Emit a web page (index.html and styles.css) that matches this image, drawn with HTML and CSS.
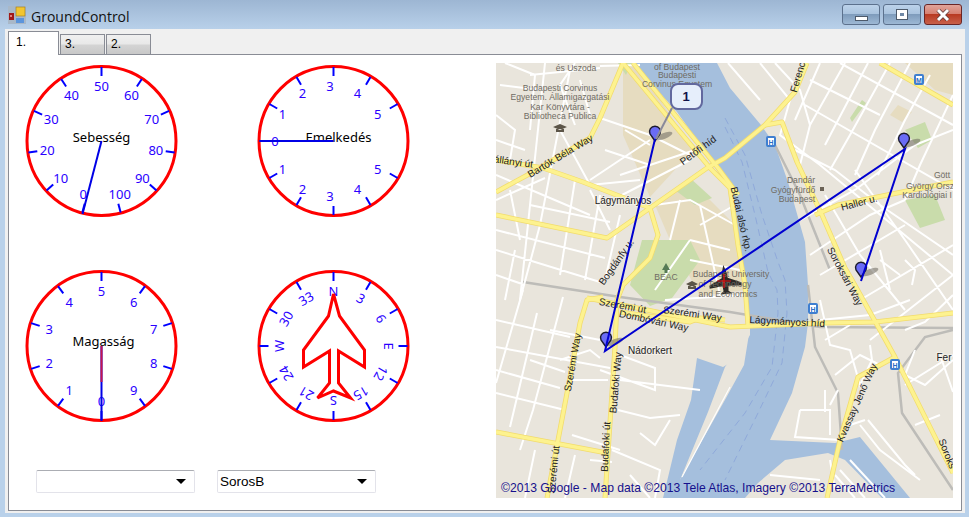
FILE: index.html
```html
<!DOCTYPE html>
<html>
<head>
	<meta charset="utf-8"/>
	<title>GroundControl</title>
	<link rel="stylesheet" href="styles.css">
</head>
<body>
<div class="window">
	<div class="titlebar">
		<svg class="app-icon" width="18" height="18" viewBox="0 0 18 18">
			<rect width="18" height="18" fill="#a9b8c8"/>
			<rect x="1" y="7" width="5" height="7" fill="#a01818"/>
			<rect x="2" y="9" width="2" height="2" fill="#e08080"/>
			<rect x="8" y="1" width="9" height="9" fill="#f2c530" stroke="#9a7a20" stroke-width="0.6"/>
			<rect x="8" y="12" width="8" height="5" fill="#5c95dc"/>
		</svg>
		<span class="title">GroundControl</span>
		<div class="caption-buttons">
			<div class="caption-btn"><span class="glyph-min"></span></div>
			<div class="caption-btn"><span class="glyph-max"></span></div>
			<div class="caption-btn close">
				<svg width="14" height="12" viewBox="0 0 14 12">
					<path d="M2 1 L12 11 M12 1 L2 11" stroke="#5c3a3a" stroke-width="4.4"/>
					<path d="M2 1 L12 11 M12 1 L2 11" stroke="#fff" stroke-width="3"/>
				</svg>
			</div>
		</div>
	</div>
	<div class="client">
		<div class="tabs">
			<div class="tab active">1.</div>
			<div class="tab">3.</div>
			<div class="tab">2.</div>
		</div>
		<div class="panel">
			<div class="left-col">
				<div class="gauges">
					<!-- Sebesseg -->
					<svg class="gauge" viewBox="-79.5 -80 160 160">
						<circle class="ring" r="74.5"/>
						<line class="tick" y1="-74" y2="-65" transform="rotate(195)"/>
						<line class="tick" y1="-74" y2="-65" transform="rotate(228)"/>
						<line class="tick" y1="-74" y2="-65" transform="rotate(261)"/>
						<line class="tick" y1="-74" y2="-65" transform="rotate(294)"/>
						<line class="tick" y1="-74" y2="-65" transform="rotate(327)"/>
						<line class="tick" y1="-74" y2="-65"/>
						<line class="tick" y1="-74" y2="-65" transform="rotate(33)"/>
						<line class="tick" y1="-74" y2="-65" transform="rotate(66)"/>
						<line class="tick" y1="-74" y2="-65" transform="rotate(99)"/>
						<line class="tick" y1="-74" y2="-65" transform="rotate(132)"/>
						<line class="tick" y1="-74" y2="-65" transform="rotate(165)"/>
						<text class="num" dx="-4" transform="rotate(195) translate(0,-55) rotate(-195)">0</text>
						<text class="num" transform="rotate(228) translate(0,-55) rotate(-228)">10</text>
						<text class="num" transform="rotate(261) translate(0,-55) rotate(-261)">20</text>
						<text class="num" transform="rotate(294) translate(0,-55) rotate(-294)">30</text>
						<text class="num" transform="rotate(327) translate(0,-55) rotate(-327)">40</text>
						<text class="num" transform="translate(0,-55)">50</text>
						<text class="num" transform="rotate(33) translate(0,-55) rotate(-33)">60</text>
						<text class="num" transform="rotate(66) translate(0,-55) rotate(-66)">70</text>
						<text class="num" transform="rotate(99) translate(0,-55) rotate(-99)">80</text>
						<text class="num" transform="rotate(132) translate(0,-55) rotate(-132)">90</text>
						<text class="num" dx="4" transform="rotate(165) translate(0,-55) rotate(-165)">100</text>
						<text class="gauge-name" y="-4">Sebesség</text>
						<line class="needle" x1="0" y1="0" x2="-19" y2="73"/>
					</svg>
					<!-- Emelkedes -->
					<svg class="gauge" viewBox="-79.5 -80 160 160">
						<circle class="ring" r="74.5"/>
						<line class="tick" y1="-74" y2="-65"/>
						<line class="tick" y1="-74" y2="-65" transform="rotate(30)"/>
						<line class="tick" y1="-74" y2="-65" transform="rotate(60)"/>
						<line class="tick" y1="-74" y2="-65" transform="rotate(120)"/>
						<line class="tick" y1="-74" y2="-65" transform="rotate(150)"/>
						<line class="tick" y1="-74" y2="-65" transform="rotate(180)"/>
						<line class="tick" y1="-74" y2="-65" transform="rotate(210)"/>
						<line class="tick" y1="-74" y2="-65" transform="rotate(240)"/>
						<line class="tick" y1="-74" y2="-65" transform="rotate(270)"/>
						<line class="tick" y1="-74" y2="-65" transform="rotate(300)"/>
						<line class="tick" y1="-74" y2="-65" transform="rotate(330)"/>
						<text class="num" dx="-3.5" transform="translate(0,-55)">3</text>
						<text class="num" dx="-3.5" transform="rotate(30) translate(0,-55) rotate(-30)">4</text>
						<text class="num" dx="-3.5" transform="rotate(60) translate(0,-55) rotate(-60)">5</text>
						<text class="num" dx="-3.5" transform="rotate(120) translate(0,-55) rotate(-120)">5</text>
						<text class="num" dx="-3.5" transform="rotate(150) translate(0,-55) rotate(-150)">4</text>
						<text class="num" dx="-3.5" transform="rotate(180) translate(0,-55) rotate(-180)">3</text>
						<text class="num" dx="-3.5" transform="rotate(210) translate(0,-55) rotate(-210)">2</text>
						<text class="num" dx="-3.5" transform="rotate(240) translate(0,-55) rotate(-240)">1</text>
						<text class="num" dx="-3.5" transform="rotate(270) translate(0,-55) rotate(-270)">0</text>
						<text class="num" dx="-3.5" transform="rotate(300) translate(0,-55) rotate(-300)">1</text>
						<text class="num" dx="-3.5" transform="rotate(330) translate(0,-55) rotate(-330)">2</text>
						<text class="gauge-name" x="5" y="-4">Emelkedés</text>
						<line class="needle" x1="0" y1="0" x2="-74" y2="0"/>
					</svg>
					<!-- Magassag -->
					<svg class="gauge" viewBox="-79.5 -80 160 160">
						<circle class="ring" r="74.5"/>
						<line class="tick" y1="-74" y2="-65" transform="rotate(180)"/>
						<line class="tick" y1="-74" y2="-65" transform="rotate(216)"/>
						<line class="tick" y1="-74" y2="-65" transform="rotate(252)"/>
						<line class="tick" y1="-74" y2="-65" transform="rotate(288)"/>
						<line class="tick" y1="-74" y2="-65" transform="rotate(324)"/>
						<line class="tick" y1="-74" y2="-65"/>
						<line class="tick" y1="-74" y2="-65" transform="rotate(36)"/>
						<line class="tick" y1="-74" y2="-65" transform="rotate(72)"/>
						<line class="tick" y1="-74" y2="-65" transform="rotate(108)"/>
						<line class="tick" y1="-74" y2="-65" transform="rotate(144)"/>
						<text class="num" transform="rotate(180) translate(0,-55) rotate(-180)">0</text>
						<text class="num" transform="rotate(216) translate(0,-55) rotate(-216)">1</text>
						<text class="num" transform="rotate(252) translate(0,-55) rotate(-252)">2</text>
						<text class="num" transform="rotate(288) translate(0,-55) rotate(-288)">3</text>
						<text class="num" transform="rotate(324) translate(0,-55) rotate(-324)">4</text>
						<text class="num" transform="translate(0,-55)">5</text>
						<text class="num" transform="rotate(36) translate(0,-55) rotate(-36)">6</text>
						<text class="num" transform="rotate(72) translate(0,-55) rotate(-72)">7</text>
						<text class="num" transform="rotate(108) translate(0,-55) rotate(-108)">8</text>
						<text class="num" transform="rotate(144) translate(0,-55) rotate(-144)">9</text>
						<text class="gauge-name" x="2" y="-5">Magasság</text>
						<line class="needle" x1="0" y1="0" x2="0" y2="75"/>
						<line class="needle-short" x1="0" y1="0" x2="0" y2="36"/>
					</svg>
					<!-- iranytu -->
					<svg class="gauge" viewBox="-79.5 -80 160 160">
						<circle class="ring" r="74.5"/>
						<line class="tick" y1="-74" y2="-65"/>
						<line class="tick" y1="-74" y2="-65" transform="rotate(30)"/>
						<line class="tick" y1="-74" y2="-65" transform="rotate(60)"/>
						<line class="tick" y1="-74" y2="-65" transform="rotate(90)"/>
						<line class="tick" y1="-74" y2="-65" transform="rotate(120)"/>
						<line class="tick" y1="-74" y2="-65" transform="rotate(150)"/>
						<line class="tick" y1="-74" y2="-65" transform="rotate(180)"/>
						<line class="tick" y1="-74" y2="-65" transform="rotate(210)"/>
						<line class="tick" y1="-74" y2="-65" transform="rotate(240)"/>
						<line class="tick" y1="-74" y2="-65" transform="rotate(270)"/>
						<line class="tick" y1="-74" y2="-65" transform="rotate(300)"/>
						<line class="tick" y1="-74" y2="-65" transform="rotate(330)"/>
						<text class="num" transform="translate(0,-55)">N</text>
						<text class="num" transform="rotate(30) translate(0,-55)">3</text>
						<text class="num" transform="rotate(60) translate(0,-55)">6</text>
						<text class="num" transform="rotate(90) translate(0,-55)">E</text>
						<text class="num" transform="rotate(120) translate(0,-55)">12</text>
						<text class="num" transform="rotate(150) translate(0,-55)">15</text>
						<text class="num" transform="rotate(180) translate(0,-55)">S</text>
						<text class="num" transform="rotate(210) translate(0,-55)">21</text>
						<text class="num" transform="rotate(240) translate(0,-55)">24</text>
						<text class="num" transform="rotate(270) translate(0,-55)">W</text>
						<text class="num" transform="rotate(300) translate(0,-55)">30</text>
						<text class="num" transform="rotate(330) translate(0,-55)">33</text>
						<polygon class="plane-outline" points="0,-52 6,-30 31,4 31,21 5,5 5,37 17,52 0,45 -16,52 -4,37 -4,5 -30,21 -30,4 -5,-30"/>
					</svg>
				</div>
				<div class="combos">
					<div class="combo"><span class="combo-arrow"></span></div>
					<div class="combo"><span>SorosB</span><span class="combo-arrow"></span></div>
				</div>
			</div>
			<svg class="map" viewBox="496 63 457 435">
				<rect x="496" y="63" width="457" height="435" fill="#e9e5dc"/>
				<!-- tan areas and parks -->
				<g class="tan">
					<polygon points="623,63 636,63 693,150 650,197 623,135"/>
					<polygon points="655,205 690,180 735,225 745,290 700,296 670,240"/>
					<polygon points="905,63 953,63 953,95 935,90"/>
					<polygon points="898,105 912,112 902,122 890,115"/>
				</g>
				<g class="park">
					<polygon points="630,285 642,240 660,240 690,240 700,260 672,298 650,306"/>
					<polygon points="675,190 690,178 712,198 695,205"/>
					<polygon points="714,110 725,90 762,128 755,138"/>
					<polygon points="850,118 862,100 866,103 852,122"/>
					<polygon points="905,130 925,122 932,140 918,148"/>
					<polygon points="905,200 935,195 945,220 920,228"/>
					<polygon points="618,63 632,63 626,75"/>
				</g>
				<!-- river -->
				<path class="water" d="M633 63 L717 63 L730 88 L761 125 L775 145 L788 182 L805 242 L808 285 L808 323 L805 347 L792 393 L770 440 L835 443 L860 437 L910 498 L882 498 L845 460 L828 453 L785 460 L758 483 L745 498 L663 498 L677 440 L691 400 L697 358 L723 367 L735 360 L750 335 L750 323 L745 285 L738 245 L730 188 L710 158 L677 112 Z"/>
				<polygon class="land" points="725,367 749,334 744,365 726,398 690,462 680,480 708,412"/>
				<path class="river-dash" d="M725 118 L745 155 L762 215 L778 262 L785 280 L787 313 L782 363 L758 413 L725 480"/>
				<path class="river-dash" d="M725 127 L742 162 L755 215 L768 272 L777 290 L778 313 L772 367 L745 413 L700 470"/>
				<!-- rail -->
				<path class="rail" d="M523 282 L620 297 L730 312 L820 327 L953 328 M808 285 L815 347 L838 393 L842 450 M953 330 L925 337 L898 373 L902 413 L953 490 M775 145 L800 195 L830 270"/>
				<!-- streets -->
				<path class="street" d="M496 175 L590 215 M496 230 L605 258 M496 250 L600 282 M496 275 L525 285 M545 63 L520 300 M570 70 L540 225 L520 300 M560 130 L590 185 L640 180 M600 118 L650 135 L690 155 M605 150 L650 165 M590 180 L650 140 M625 130 L650 145 M620 175 L695 150 M622 195 L690 160 M590 190 L610 230 M510 190 L520 240 M530 205 L610 222 M640 65 L600 66 M580 80 L590 115 M500 85 L540 90 M575 63 L560 85 L575 125 M575 180 L560 275 M600 195 L585 280 M496 200 L545 178 M496 140 L525 150 M496 115 L515 130 L510 160 M620 215 L605 280 M515 250 L505 300"/>
				<path class="street" d="M505 63 L535 75 L530 130 M530 75 L600 68 M496 320 L570 337 M496 347 L610 368 M573 380 L608 380 M496 393 L565 410 M523 290 L496 383 M563 297 L533 410 L520 450 M537 313 L510 427 M550 330 L600 340 M530 360 L565 372 M496 370 L560 388 M620 355 L655 368 L655 390 L600 370 M620 380 L700 390 M618 410 L650 418 L680 415 M612 450 L660 470 L655 498 M572 435 L620 450 M640 433 L655 445 L670 420 M560 360 L590 350 L600 358 M535 450 L525 498 M575 455 L565 498 M590 460 L612 462 M630 475 L650 498"/>
				<path class="street" d="M655 205 L690 200 L735 225 M680 200 L670 240 M700 205 L720 295 M655 290 L690 240 M690 240 L730 250 M665 300 L745 295 M700 225 L735 205 M690 260 L740 270"/>
				<path class="street" d="M760 63 L790 100 L780 135 L820 165 L953 275 M728 63 L760 100 M775 63 L800 90 L810 125 M820 63 L795 120 M845 63 L810 125 L800 165 M868 63 L825 145 M890 63 L850 135 L830 170 M910 63 L875 130 L855 175 M930 75 L905 120 L878 175 M953 95 L920 165 L905 200 M795 150 L835 170 L880 205 L953 255 M805 105 L953 190 M840 63 L953 125 M810 80 L880 115 M800 220 L855 190 L915 145 L953 130 M810 255 L870 215 L905 200 M820 275 L905 225 M860 300 L953 245 M870 340 L953 275 M825 195 L860 255 L905 310 M855 170 L905 240 L953 310 M880 260 L900 275 M880 250 L890 290 M905 260 L915 270 L912 285"/>
				<path class="street" d="M820 300 L830 345 L850 350 L860 385 L872 360 L870 345 M825 340 L850 325 M835 375 L860 355 L880 365 M820 320 L870 315 L910 300 M905 330 L925 322 L953 295 M915 350 L905 375 L925 385 L953 360 M905 385 L953 355 M940 415 L915 425 M940 355 L953 392 M868 420 L905 465 L915 475 M860 425 L880 450 L920 480 M800 410 L795 437 L840 440 M800 410 L830 410 L830 435 M825 390 L825 412 M838 390 L830 405 M850 425 L865 420 M835 475 L855 498 M850 460 L885 498 M840 470 L865 498 M770 475 L820 480 M830 460 L835 490"/>
				<path class="street-thin" d="M730 387 L682 477"/>
				<!-- yellow roads, casing then fill -->
				<g class="roads-casing">
					<path d="M496 192 L533 172 L590 138 L600 118 L623 63"/>
					<path d="M496 160 L543 168 L583 182 L650 208"/>
					<path d="M496 215 L607 238 L650 208 L707 168 L725 158 L765 125 L795 92 L807 63"/>
					<path d="M623 63 L710 168 L730 188 L738 245 L745 285 L748 325"/>
					<path d="M633 63 L718 168 L738 195"/>
					<path d="M650 208 L658 235 L650 258 L623 285 L617 300 L615 347 L605 498"/>
					<path d="M603 297 L587 300 L580 323 L567 393 L547 498"/>
					<path d="M587 298 L647 310 L730 327 L825 323 L875 322 L953 313"/>
					<path d="M620 312 L690 322 L700 318 L725 320"/>
					<path d="M496 432 L607 453"/>
					<path d="M765 125 L782 122 L797 162 L822 215 L845 268 L852 280 L895 357 L953 473"/>
					<path d="M815 215 L838 205 L902 192 L953 182"/>
					<path d="M895 357 L858 377 L840 440 L827 498"/>
					<path d="M880 63 L953 105"/>
				</g>
				<g class="roads">
					<path d="M496 192 L533 172 L590 138 L600 118 L623 63"/>
					<path d="M496 160 L543 168 L583 182 L650 208"/>
					<path d="M496 215 L607 238 L650 208 L707 168 L725 158 L765 125 L795 92 L807 63"/>
					<path d="M623 63 L710 168 L730 188 L738 245 L745 285 L748 325"/>
					<path d="M633 63 L718 168 L738 195"/>
					<path d="M650 208 L658 235 L650 258 L623 285 L617 300 L615 347 L605 498"/>
					<path d="M603 297 L587 300 L580 323 L567 393 L547 498"/>
					<path d="M587 298 L647 310 L730 327 L825 323 L875 322 L953 313"/>
					<path d="M620 312 L690 322 L700 318 L725 320"/>
					<path d="M496 432 L607 453"/>
					<path d="M765 125 L782 122 L797 162 L822 215 L845 268 L852 280 L895 357 L953 473"/>
					<path d="M815 215 L838 205 L902 192 L953 182"/>
					<path d="M895 357 L858 377 L840 440 L827 498"/>
					<path d="M880 63 L953 105"/>
				</g>
				<!-- plane marker sits under the labels -->
				<g transform="translate(725,281) rotate(-6)">
					<path d="M0 -16 L2.5 -8 L3 -3 L16 3 L16 6 L3 5 L2.5 10 L6 13 L-6 13 L-2.5 10 L-3 5 L-16 6 L-16 3 L-3 -3 L-2.5 -8 Z" fill="#2c2a28"/>
				</g>
				<!-- labels on the map -->
				<g class="poi">
					<text x="576" y="71">és Uszoda</text>
					<text x="560" y="91">Budapesti Corvinus</text>
					<text x="560" y="100">Egyetem. Államigazgatási</text>
					<text x="560" y="110">Kar Könyvtára -</text>
					<text x="560" y="119">Bibliotheca Publica</text>
					<text x="677" y="70">of Budapest</text>
					<text x="677" y="78">Budapesti</text>
					<text x="677" y="87">Corvinus Egyetem</text>
					<text x="666" y="280">BEAC</text>
					<text x="731" y="277">Budapest University</text>
					<text x="725" y="287">of Technology</text>
					<text x="728" y="297">and Economics</text>
					<text x="801" y="183">Dandár</text>
					<text x="793" y="193">Gyógyfürdő</text>
					<text x="797" y="202">Budapest</text>
					<text x="942" y="178">Gött</text>
					<text x="930" y="189">György Orsz</text>
					<text x="927" y="198">Kardiológiai I</text>
				</g>
				<g class="place">
					<text x="623" y="204">Lágymányos</text>
					<text x="650" y="354">Nádorkert</text>
					<text x="944" y="361">Fer</text>
				</g>
				<g class="road-name">
					<text transform="translate(562,159) rotate(-31)">Bartók Béla Way</text>
					<text transform="translate(513,165) rotate(8)">állányi út</text>
					<text transform="translate(700,153) rotate(-36)">Petőfi híd</text>
					<text transform="translate(738,220) rotate(77)">Budai alsó rkp.</text>
					<text transform="translate(619,264) rotate(-55)">Bogdánfy u.</text>
					<text transform="translate(801,78) rotate(-73)">Ferenc</text>
					<text transform="translate(860,206) rotate(-15)">Haller u.</text>
					<text transform="translate(842,278) rotate(62)">Soroksári Way</text>
					<text transform="translate(622,309) rotate(10)">Szerémi út</text>
					<text transform="translate(692,317) rotate(8)">Szerémi Way</text>
					<text transform="translate(653,324) rotate(12)">Dombóvári Way</text>
					<text transform="translate(787,325) rotate(3)">Lágymányosi híd</text>
					<text transform="translate(576,363) rotate(-80)">Szerémi Way</text>
					<text transform="translate(619,383) rotate(-85)">Budafoki Way</text>
					<text transform="translate(609,447) rotate(-87)">Budafoki út</text>
					<text transform="translate(557,470) rotate(-84)">Szerémi út</text>
					<text transform="translate(860,404) rotate(-66)">Kvassay Jenő Way</text>
					<text transform="translate(944,455) rotate(68)">Soroks</text>
				</g>
				<!-- transit and poi markers -->
				<g class="transit">
					<rect x="915" y="75" width="8" height="9" rx="1"/>
					<rect x="767" y="137" width="8" height="9" rx="1"/>
					<rect x="809" y="304" width="8" height="9" rx="1"/>
					<rect x="891" y="360" width="8" height="9" rx="1"/>
					<text x="919" y="82.5">M</text>
					<text x="771" y="144.5">H</text>
					<text x="813" y="311.5">H</text>
					<text x="895" y="367.5">H</text>
				</g>
				<rect x="820" y="187" width="4" height="4" fill="#6b6256"/>
				<path d="M553 127 L560 124 L567 127 L560 130 Z M556 129 L556 132 L564 132 L564 129 M686 284 L692 281 L698 284 L692 287 Z M688 286 L688 289 L696 289 L696 286" fill="#5c5548"/>
				<path d="M666 263 L670 270 L667.5 270 L667.5 273 L664.5 273 L664.5 270 L662 270 Z" fill="#557a55"/>
				<!-- pins -->
				<g class="pin-shadow">
					<ellipse cx="664" cy="136" rx="9" ry="3" transform="rotate(-22 664 136)"/>
					<ellipse cx="912" cy="143" rx="9" ry="3" transform="rotate(-22 912 143)"/>
					<ellipse cx="870" cy="272" rx="9" ry="3" transform="rotate(-22 870 272)"/>
					<ellipse cx="615" cy="342" rx="9" ry="3" transform="rotate(-22 615 342)"/>
				</g>
				<path class="pin" d="M655 141 L650 134 A5.5 5.5 0 1 1 660 134 Z"/>
				<path class="pin" d="M904 148 L899 141 A5.5 5.5 0 1 1 909 141 Z"/>
				<path class="pin" d="M861 277 L856 270 A5.5 5.5 0 1 1 866 270 Z"/>
				<path class="pin" d="M606 347 L601 340 A5.5 5.5 0 1 1 611 340 Z"/>
				<!-- route -->
				<polyline class="route" points="655,139 605,351 905,149 861,281"/>
				<path d="M717 281 L731 281 M724 274 L724 288" stroke="#e81010" stroke-width="1.2"/>
				<!-- callout -->
				<line x1="672" y1="108" x2="656" y2="139" stroke="#8a8a9a" stroke-width="2"/>
				<rect x="671" y="84" width="31" height="25" rx="7" fill="#e6eefb" stroke="#62689e" stroke-width="2"/>
				<text class="callout-num" x="686" y="101">1</text>
				<text class="map-copy" x="501" y="492">©2013 Google - Map data ©2013 Tele Atlas, Imagery ©2013 TerraMetrics</text>
			</svg>
		</div>
	</div>
</div>
</body>
</html>
```

FILE: styles.css
```css
html, body {
	margin: 0;
	padding: 0;
}
body {
	width: 969px;
	height: 517px;
	overflow: hidden;
	background-color: #b9d1ea;
}
.window {
	display: flex;
	flex-direction: column;
	height: 517px;
	padding: 0 4px 4px 5px;
	box-sizing: border-box;
	background: linear-gradient(#9db6d3, #b9d1ea 30px);
}
.titlebar {
	display: flex;
	align-items: center;
	height: 29px;
	flex: none;
}
.app-icon {
	margin: 1px 5px 0 3px;
}
.title {
	font-family: "Open Sans", sans-serif;
	font-size: 14px;
	color: #111;
	margin-top: 3px;
}
.caption-buttons {
	display: flex;
	gap: 3px;
	margin-left: auto;
	margin-right: 3px;
	margin-bottom: 4px;
	align-self: flex-end;
}
.caption-btn {
	display: flex;
	align-items: center;
	justify-content: center;
	width: 38px;
	height: 21px;
	box-sizing: border-box;
	border: 1px solid #5c718d;
	border-radius: 3px;
	background: linear-gradient(#bcd2ea 0, #a9c3de 48%, #7f9cbc 50%, #9db8d4 100%);
}
.caption-btn.close {
	border-color: #6a2626;
	background: linear-gradient(#e0a49a 0, #d67f70 48%, #b83a22 50%, #c8604a 100%);
}
.glyph-min {
	width: 11px;
	height: 3px;
	margin-top: 7px;
	background: #fff;
	border: 1px solid #4d5a6b;
}
.glyph-max {
	width: 4px;
	height: 3px;
	background: #6f88a6;
	border: 3px solid #fff;
	outline: 1px solid #4d5a6b;
}
.client {
	flex: 1;
	display: flex;
	flex-direction: column;
	padding: 3px 3px 2px 3px;
	background-color: #f0f0f0;
	min-height: 0;
}
.tabs {
	display: flex;
	align-items: flex-end;
	gap: 1px;
	height: 23px;
	flex: none;
	position: relative;
	z-index: 1;
	margin-bottom: -1px;
	font-family: "Liberation Sans", sans-serif;
	font-size: 12px;
	color: #000;
}
.tab {
	width: 45px;
	height: 21px;
	box-sizing: border-box;
	padding: 2px 0 0 4px;
	border: 1px solid #898c95;
	background: linear-gradient(#f0f0f0, #e8e8e8 48%, #d4d4d4 52%, #c8c8c8);
}
.tab.active {
	width: 51px;
	height: 24px;
	padding: 3px 0 0 7px;
	background: #fff;
	border-bottom: none;
}
.panel {
	flex: 1;
	display: flex;
	min-height: 0;
	box-sizing: border-box;
	border: 1px solid #898c95;
	background: #fff;
}
.left-col {
	width: 487px;
	flex: none;
	padding: 6px 0 0 13px;
	box-sizing: border-box;
}
.gauges {
	display: grid;
	grid-template-columns: 160px 160px;
	grid-template-rows: 160px 160px;
	column-gap: 72px;
	row-gap: 45px;
}
.gauge {
	display: block;
	width: 160px;
	height: 160px;
}
.ring {
	fill: none;
	stroke: #ff0000;
	stroke-width: 3;
}
.tick {
	stroke: #0000ff;
	stroke-width: 2;
}
.num {
	font-family: "Noto Sans", sans-serif;
	font-size: 13px;
	fill: #2a00ff;
	text-anchor: middle;
	dominant-baseline: central;
}
.gauge-name {
	font-family: "Noto Sans", sans-serif;
	font-size: 13px;
	fill: #000;
	text-anchor: middle;
	dominant-baseline: central;
}
.needle {
	stroke: #0000e6;
	stroke-width: 2;
}
.needle-short {
	stroke: #c41450;
	stroke-width: 2;
}
.plane-outline {
	fill: none;
	stroke: #ff0000;
	stroke-width: 3;
}
.combos {
	display: flex;
	gap: 22px;
	margin-top: 44px;
	margin-left: 14px;
}
.combo {
	display: flex;
	align-items: center;
	width: 159px;
	height: 23px;
	box-sizing: border-box;
	padding: 0 8px 0 2px;
	border: 1px solid #e3e3ea;
	border-top-color: #abadb3;
	border-radius: 2px;
	background: #fff;
	font-family: "Liberation Sans", sans-serif;
	font-size: 13.5px;
	color: #000;
}
.combo-arrow {
	margin-left: auto;
	width: 0;
	height: 0;
	border-left: 5px solid transparent;
	border-right: 5px solid transparent;
	border-top: 5px solid #000;
}
.map {
	display: block;
	width: 457px;
	height: 435px;
	margin-top: 8px;
	flex: none;
}
.tan polygon { fill: #e6dcc0; }
.park polygon { fill: #c9dcab; }
.water { fill: #a5bfdd; }
.land { fill: #e9e5dc; }
.river-dash {
	fill: none;
	stroke: #8fa9da;
	stroke-width: 1;
	stroke-dasharray: 7 5;
}
.rail {
	fill: none;
	stroke: #bdbcb8;
	stroke-width: 2.5;
}
.street {
	fill: none;
	stroke: #fff;
	stroke-width: 2;
}
.street-thin {
	fill: none;
	stroke: #fff;
	stroke-width: 1.2;
}
.roads-casing path {
	fill: none;
	stroke: #f2dc6c;
	stroke-width: 5;
	stroke-linejoin: round;
}
.roads path {
	fill: none;
	stroke: #fdf28f;
	stroke-width: 3.5;
	stroke-linejoin: round;
}
.poi text {
	font-family: "Liberation Sans", sans-serif;
	font-size: 8.6px;
	fill: #6f6b63;
	text-anchor: middle;
}
.place text {
	font-family: "Liberation Sans", sans-serif;
	font-size: 10px;
	fill: #222;
	text-anchor: middle;
	paint-order: stroke;
	stroke: #f2efe8;
	stroke-width: 2px;
}
.road-name text {
	font-family: "Liberation Sans", sans-serif;
	font-size: 10px;
	fill: #222;
	text-anchor: middle;
}
.transit rect {
	fill: #fff;
	stroke: #3f7fd0;
	stroke-width: 2;
}
.transit text {
	font-family: "Liberation Sans", sans-serif;
	font-size: 7px;
	font-weight: bold;
	fill: #2f6fc4;
	text-anchor: middle;
}
.pin-shadow ellipse { fill: #6b675f; opacity: 0.55; }
.pin {
	fill: #6a6cf5;
	stroke: #1b1b2e;
	stroke-width: 1.4;
}
.route {
	fill: none;
	stroke: #0000d0;
	stroke-width: 2;
}
.callout-num {
	font-family: "Liberation Sans", sans-serif;
	font-size: 13px;
	font-weight: bold;
	fill: #12124a;
	text-anchor: middle;
}
.map-copy {
	font-family: "Liberation Sans", sans-serif;
	font-size: 12.15px;
	fill: #16108c;
}
```
